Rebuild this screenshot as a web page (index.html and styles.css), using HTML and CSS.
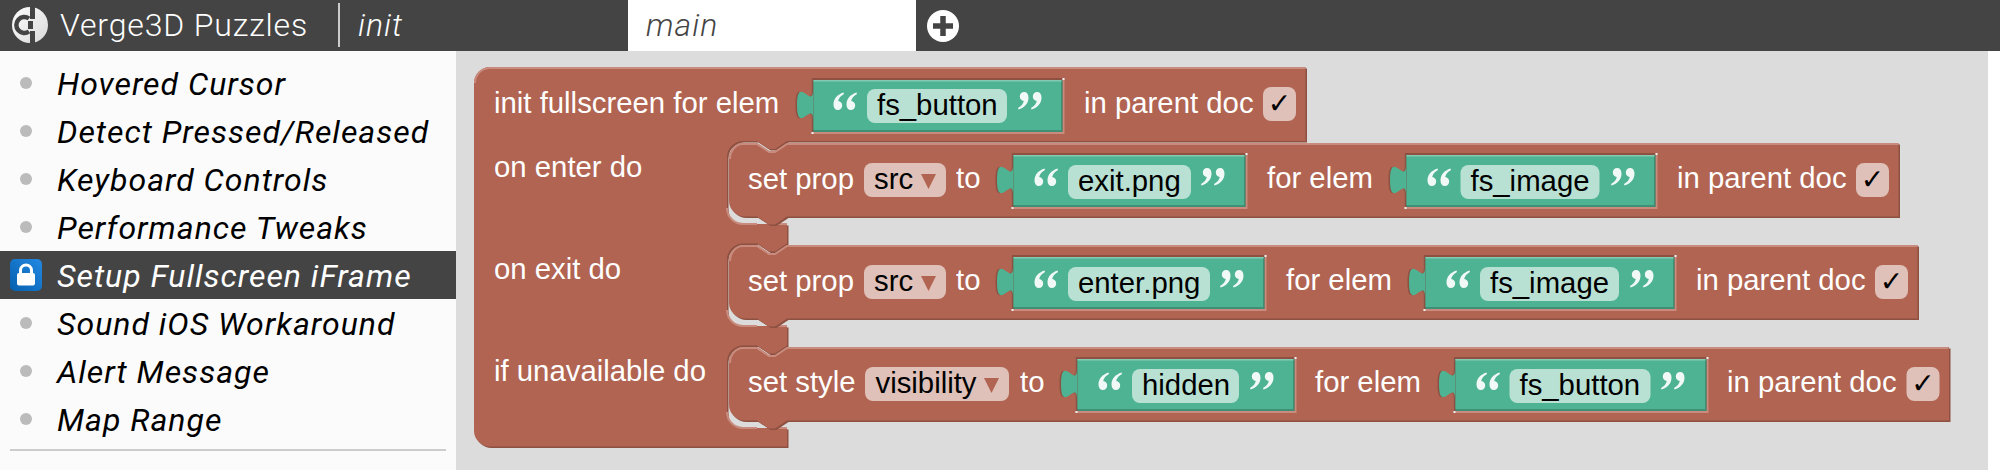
FILE: index.html
```html
<!DOCTYPE html>
<html lang="en">
<head>
<meta charset="utf-8">
<title>Verge3D Puzzles</title>
<link rel="stylesheet" href="styles.css">
</head>
<body>
<header class="topbar">
  <div class="brand">
    <svg class="logo" viewBox="0 0 36 36" width="36" height="36" aria-hidden="true">
      <defs><linearGradient id="lg" x1="0" y1="0" x2="1" y2="1"><stop offset="0" stop-color="#ffffff"/><stop offset="1" stop-color="#d8d8d8"/></linearGradient></defs>
      <circle cx="18" cy="18" r="18" fill="url(#lg)"/>
      <path d="M17 11.5 A8 8 0 1 0 17 24.5" fill="none" stroke="#444" stroke-width="4.5"/>
      <path d="M18 -1 H23 V12 H18 Z M18 24 H23 V37 H18 Z M16 14 H21 V22 H16 Z" fill="#444"/>
    </svg>
    <span class="brand-name">Verge3D Puzzles</span>
  </div>
  <nav class="tabs">
    <div class="tab tab-first">init</div>
    <div class="tab tab-active">main</div>
    <svg class="add" viewBox="0 0 32 32" width="32" height="32" aria-hidden="true">
      <circle cx="16" cy="16" r="16" fill="#fff"/>
      <path d="M6 16 H26 M16 6 V26" stroke="#444" stroke-width="5.5"/>
    </svg>
  </nav>
</header>
<main class="content">
  <aside class="sidebar">
    <ul class="plist">
      <li class="pitem"><span class="dot"></span><span class="plabel">Hovered Cursor</span></li>
      <li class="pitem"><span class="dot"></span><span class="plabel">Detect Pressed/Released</span></li>
      <li class="pitem"><span class="dot"></span><span class="plabel">Keyboard Controls</span></li>
      <li class="pitem"><span class="dot"></span><span class="plabel">Performance Tweaks</span></li>
      <li class="pitem pitem-active">
        <svg class="lock" viewBox="0 0 32 32" width="32" height="32" aria-hidden="true">
          <defs><linearGradient id="bl" x1="0" y1="1" x2="1" y2="0"><stop offset="0" stop-color="#0560ae"/><stop offset="1" stop-color="#2388e2"/></linearGradient></defs>
          <rect width="32" height="32" rx="5" fill="url(#bl)"/>
          <path d="M10.5 15 V11.5 a5.5 5.5 0 0 1 11 0 V15" fill="none" stroke="#fff" stroke-width="3"/>
          <rect x="7" y="14" width="18" height="12.5" rx="2" fill="#fff"/>
        </svg><span class="plabel">Setup Fullscreen iFrame</span></li>
      <li class="pitem"><span class="dot"></span><span class="plabel">Sound iOS Workaround</span></li>
      <li class="pitem"><span class="dot"></span><span class="plabel">Alert Message</span></li>
      <li class="pitem"><span class="dot"></span><span class="plabel">Map Range</span></li>
    </ul>
    <hr class="rule">
  </aside>
  <section class="workspace">
    <svg class="canvas" viewBox="456 51 1532 419" width="1532" height="419">
      <defs>
        <path id="tab" d="M0,12 c0,20 -16,-16 -16,15 s16,-5 16,15 Z"/>
        <path id="qs" d="M10.5,0.5 C4.5,2.5 0.5,6.5 0.5,12.5 C0.5,16 2.2,18 4.8,18 C7.4,18 9.2,16.2 9.2,13.5 C9.2,11 7.6,9.4 5.2,9 C5.8,6 7.8,3.8 11,2 Z"/>
        <g id="ql"><use href="#qs"/><use href="#qs" x="13"/></g>
        <g id="qr"><use href="#ql" transform="rotate(180 12 9)"/></g>
        <g id="cap">
          <use href="#tab" class="slot-dark" x="-1.5" y="0"/>
          <use href="#tab" class="green" x="0" y="0"/>
        </g>
        <path id="outer" d="M474,83 a16,16 0 0 1 16,-16 H1305.5 V141 H787 l-12,8 h-6 l-12,-8 H743 a16,16 0 0 0 -16,16 V208 a16,16 0 0 0 16,16 H787 V243.5 l-12,8 h-6 l-12,-8 H743 a16,16 0 0 0 -16,16 V310 a16,16 0 0 0 16,16 H787 V345.5 l-12,8 h-6 l-12,-8 H743 a16,16 0 0 0 -16,16 V412 a16,16 0 0 0 16,16 H787 V446.5 H490 a16,16 0 0 1 -16,-16 Z"/>
        <path id="stmt1" d="M729,159 a14,16 0 0 1 14,-16 H757 l12,8 h6 l12,-8 H1898.5 V216.5 H787 l-12,8 h-6 l-12,-8 H745 a16,16 0 0 1 -16,-16 Z"/>
        <path id="stmt2" d="M729,261 a14,16 0 0 1 14,-16 H757 l12,8 h6 l12,-8 H1917.5 V318.5 H787 l-12,8 h-6 l-12,-8 H745 a16,16 0 0 1 -16,-16 Z"/>
        <path id="stmt3" d="M729,363 a14,16 0 0 1 14,-16 H757 l12,8 h6 l12,-8 H1949 V420.5 H787 l-12,8 h-6 l-12,-8 H745 a16,16 0 0 1 -16,-16 Z"/>
      </defs>

      <use href="#outer" class="b-dark" x="1.5" y="1.5"/>
      <use href="#outer" class="b-main"/>
      <path class="b-light" d="M475,83 a15,15 0 0 1 15,-15 H1305 M727,208 a16,16 0 0 0 16,16 H757 M775,224 H787 M727,310 a16,16 0 0 0 16,16 H757 M775,326 H787 M727,412 a16,16 0 0 0 16,16 H757 M775,428 H787"/>
      <text class="t" x="494" y="113">init fullscreen for elem</text>
      <text class="t" x="494" y="177">on enter do</text>
      <text class="t" x="494" y="279">on exit do</text>
      <text class="t" x="494" y="381">if unavailable do</text>

      <g transform="translate(813,78)">
        <rect class="slot-light" x="-1.5" width="253" height="56"/>
        <rect class="slot-dark" x="-1.5" width="251" height="54"/>
        <use href="#cap"/>
        <rect class="green-dark" x="0.5" y="2" width="249" height="52"/>
        <rect class="green" x="0.5" y="2" width="247.5" height="50"/>
        <rect class="green-light" x="0.5" y="2" width="248" height="1.5"/>
        <rect class="pin" x="-1.5" y="54" width="2" height="2"/><rect class="pin" x="249.5" width="2" height="2"/>
        <use href="#ql" class="quote" x="20" y="14"/>
        <rect class="f-green" x="54" y="11" width="140" height="34" rx="8"/>
        <text class="tk" x="64" y="37">fs_button</text>
        <use href="#qr" class="quote" x="205" y="14"/>
      </g>
      <text class="t" x="1084" y="113">in parent doc</text>
      <rect class="f-red" x="1263" y="87" width="33" height="34" rx="8"/>
      <text class="chk" x="1279.5" y="113">✓</text>

      <use href="#stmt1" class="b-dark" x="1.5" y="1.5"/>
      <use href="#stmt1" class="b-main"/>
      <path class="b-light" d="M730,159 a13,15 0 0 1 13,-15 H757 l12,8 h6 l12,-8 H1898"/>
      <text class="t" x="748" y="189">set prop</text>
      <rect class="f-red" x="864" y="163" width="82" height="34" rx="8"/>
      <text class="tk" x="874" y="189">src</text>
      <path class="tri" d="M921,174 H936 L928.5,189 Z"/>
      <text class="t" x="956" y="188">to</text>
      <g transform="translate(1013,153)">
        <rect class="slot-light" x="-1.5" width="236" height="56"/>
        <rect class="slot-dark" x="-1.5" width="234" height="54"/>
        <use href="#cap"/>
        <rect class="green-dark" x="0.5" y="2" width="232" height="52"/>
        <rect class="green" x="0.5" y="2" width="230.5" height="50"/>
        <rect class="green-light" x="0.5" y="2" width="231" height="1.5"/>
        <rect class="pin" x="-1.5" y="54" width="2" height="2"/><rect class="pin" x="232.5" width="2" height="2"/>
        <use href="#ql" class="quote" x="21" y="15"/>
        <rect class="f-green" x="55" y="12" width="123" height="34" rx="8"/>
        <text class="tk" x="65" y="38">exit.png</text>
        <use href="#qr" class="quote" x="188" y="15"/>
      </g>
      <text class="t" x="1267" y="188">for elem</text>
      <g transform="translate(1406,153)">
        <rect class="slot-light" x="-1.5" width="253" height="56"/>
        <rect class="slot-dark" x="-1.5" width="251" height="54"/>
        <use href="#cap"/>
        <rect class="green-dark" x="0.5" y="2" width="249" height="52"/>
        <rect class="green" x="0.5" y="2" width="247.5" height="50"/>
        <rect class="green-light" x="0.5" y="2" width="248" height="1.5"/>
        <rect class="pin" x="-1.5" y="54" width="2" height="2"/><rect class="pin" x="249.5" width="2" height="2"/>
        <use href="#ql" class="quote" x="21" y="15"/>
        <rect class="f-green" x="54.5" y="12" width="139" height="34" rx="8"/>
        <text class="tk" x="64.5" y="38">fs_image</text>
        <use href="#qr" class="quote" x="205" y="15"/>
      </g>
      <text class="t" x="1677" y="188">in parent doc</text>
      <rect class="f-red" x="1856" y="163" width="33" height="34" rx="8"/>
      <text class="chk" x="1872.5" y="189">✓</text>

      <use href="#stmt2" class="b-dark" x="1.5" y="1.5"/>
      <use href="#stmt2" class="b-main"/>
      <path class="b-light" d="M730,261 a13,15 0 0 1 13,-15 H757 l12,8 h6 l12,-8 H1917"/>
      <text class="t" x="748" y="291">set prop</text>
      <rect class="f-red" x="864" y="265" width="82" height="34" rx="8"/>
      <text class="tk" x="874" y="291">src</text>
      <path class="tri" d="M921,276 H936 L928.5,291 Z"/>
      <text class="t" x="956" y="290">to</text>
      <g transform="translate(1013,255)">
        <rect class="slot-light" x="-1.5" width="255" height="56"/>
        <rect class="slot-dark" x="-1.5" width="253" height="54"/>
        <use href="#cap"/>
        <rect class="green-dark" x="0.5" y="2" width="251" height="52"/>
        <rect class="green" x="0.5" y="2" width="249.5" height="50"/>
        <rect class="green-light" x="0.5" y="2" width="250" height="1.5"/>
        <rect class="pin" x="-1.5" y="54" width="2" height="2"/><rect class="pin" x="251.5" width="2" height="2"/>
        <use href="#ql" class="quote" x="21" y="15"/>
        <rect class="f-green" x="55" y="12" width="142" height="34" rx="8"/>
        <text class="tk" x="65" y="38">enter.png</text>
        <use href="#qr" class="quote" x="207" y="15"/>
      </g>
      <text class="t" x="1286" y="290">for elem</text>
      <g transform="translate(1425,255)">
        <rect class="slot-light" x="-1.5" width="253" height="56"/>
        <rect class="slot-dark" x="-1.5" width="251" height="54"/>
        <use href="#cap"/>
        <rect class="green-dark" x="0.5" y="2" width="249" height="52"/>
        <rect class="green" x="0.5" y="2" width="247.5" height="50"/>
        <rect class="green-light" x="0.5" y="2" width="248" height="1.5"/>
        <rect class="pin" x="-1.5" y="54" width="2" height="2"/><rect class="pin" x="249.5" width="2" height="2"/>
        <use href="#ql" class="quote" x="21" y="15"/>
        <rect class="f-green" x="55" y="12" width="139" height="34" rx="8"/>
        <text class="tk" x="65" y="38">fs_image</text>
        <use href="#qr" class="quote" x="205" y="15"/>
      </g>
      <text class="t" x="1696" y="290">in parent doc</text>
      <rect class="f-red" x="1875" y="265" width="33" height="34" rx="8"/>
      <text class="chk" x="1891.5" y="291">✓</text>

      <use href="#stmt3" class="b-dark" x="1.5" y="1.5"/>
      <use href="#stmt3" class="b-main"/>
      <path class="b-light" d="M730,363 a13,15 0 0 1 13,-15 H757 l12,8 h6 l12,-8 H1948.5"/>
      <text class="t" x="748" y="392">set style</text>
      <rect class="f-red" x="865" y="367" width="144" height="34" rx="8"/>
      <text class="tk" x="875.5" y="393">visibility</text>
      <path class="tri" d="M984,378 H999 L991.5,393 Z"/>
      <text class="t" x="1020" y="392">to</text>
      <g transform="translate(1077,357)">
        <rect class="slot-light" x="-1.5" width="221" height="56"/>
        <rect class="slot-dark" x="-1.5" width="219" height="54"/>
        <use href="#cap"/>
        <rect class="green-dark" x="0.5" y="2" width="217" height="52"/>
        <rect class="green" x="0.5" y="2" width="215.5" height="50"/>
        <rect class="green-light" x="0.5" y="2" width="216" height="1.5"/>
        <rect class="pin" x="-1.5" y="54" width="2" height="2"/><rect class="pin" x="217.5" width="2" height="2"/>
        <use href="#ql" class="quote" x="21" y="15"/>
        <rect class="f-green" x="55" y="12" width="107" height="34" rx="8"/>
        <text class="tk" x="65" y="38">hidden</text>
        <use href="#qr" class="quote" x="173" y="15"/>
      </g>
      <text class="t" x="1315" y="392">for elem</text>
      <g transform="translate(1455,357)">
        <rect class="slot-light" x="-1.5" width="255" height="56"/>
        <rect class="slot-dark" x="-1.5" width="253" height="54"/>
        <use href="#cap"/>
        <rect class="green-dark" x="0.5" y="2" width="251" height="52"/>
        <rect class="green" x="0.5" y="2" width="249.5" height="50"/>
        <rect class="green-light" x="0.5" y="2" width="250" height="1.5"/>
        <rect class="pin" x="-1.5" y="54" width="2" height="2"/><rect class="pin" x="251.5" width="2" height="2"/>
        <use href="#ql" class="quote" x="21" y="15"/>
        <rect class="f-green" x="54.5" y="12" width="141" height="34" rx="8"/>
        <text class="tk" x="64.5" y="38">fs_button</text>
        <use href="#qr" class="quote" x="206" y="15"/>
      </g>
      <text class="t" x="1727" y="392">in parent doc</text>
      <rect class="f-red" x="1906.5" y="367" width="33" height="34" rx="8"/>
      <text class="chk" x="1923" y="393">✓</text>
    </svg>
  </section>
</main>
</body>
</html>
```
FILE: styles.css
```css
* { box-sizing: border-box; }
html, body { margin: 0; height: 470px; overflow: hidden; background: #fff; }
body { font-family: Roboto, "Liberation Sans", sans-serif; }

.topbar { display: flex; height: 51px; background: #444; color: #fff; }
.brand { display: flex; align-items: center; width: 340px; padding-left: 12px; }
.logo { flex: none; margin-top: -1px; }
.brand-name { margin-left: 12px; padding-bottom: 2px; font-size: 32px; font-weight: 300; letter-spacing: .85px; white-space: nowrap; }
.tabs { display: flex; align-items: stretch; flex: 1; }
.tab { display: flex; align-items: center; width: 288px; padding: 0 0 2px 18px; font-size: 32px; font-style: italic; font-weight: 300; letter-spacing: 1px; }
.tab-first { position: relative; }
.tab-first::before { content: ""; position: absolute; left: -2px; top: 3px; bottom: 4px; width: 2px; background: #ccc; }
.tab-active { background: #fff; color: #444; }
.add { align-self: center; margin-left: 11px; }

.content { display: flex; height: 419px; }
.sidebar { width: 456px; flex: none; background: #fbfbfb; padding-top: 8px; }
.plist { list-style: none; margin: 0; padding: 0; }
.pitem { display: flex; align-items: center; height: 48px; font-size: 32px; font-style: italic; letter-spacing: 1px; color: #000; white-space: nowrap; }
.plabel { padding-top: 2px; margin-left: -1px; }
.pitem-active { background: #444; color: #fff; }
.dot { width: 12px; height: 12px; border-radius: 50%; background: #bbb; margin: 0 26px 0 20px; flex: none; }
.lock { flex: none; margin: 0 16px 0 10px; }
.rule { height: 2px; border: 0; margin: 6px 10px 0; background: #ccc; }

.workspace { width: 1532px; flex: none; background: #dcdcdc; overflow: hidden; }
.canvas { display: block; }

.t, .tk { font-family: "Liberation Sans", Arial, sans-serif; font-size: 29.33px; }
.t { fill: #fff; }
.tk { fill: #000; }
.chk { font-family: "DejaVu Sans", sans-serif; font-size: 28px; fill: #000; text-anchor: middle; }

.b-main { fill: #b06451; }
.b-dark { fill: #8d5041; }
.b-light { fill: none; stroke: #c88b7d; stroke-width: 2; }
.f-red { fill: #dfc1b9; }
.tri { fill: #b06451; }
.slot-light { fill: #c88b7d; }
.slot-dark { fill: #8d5041; }
.green { fill: #4eb392; }
.green-dark { fill: #3e8f75; }
.green-light { fill: #83cab3; }
.pin { fill: #eee; }
.f-green { fill: #b8e1d3; }
.quote { fill: #fff; opacity: .92; }
```
